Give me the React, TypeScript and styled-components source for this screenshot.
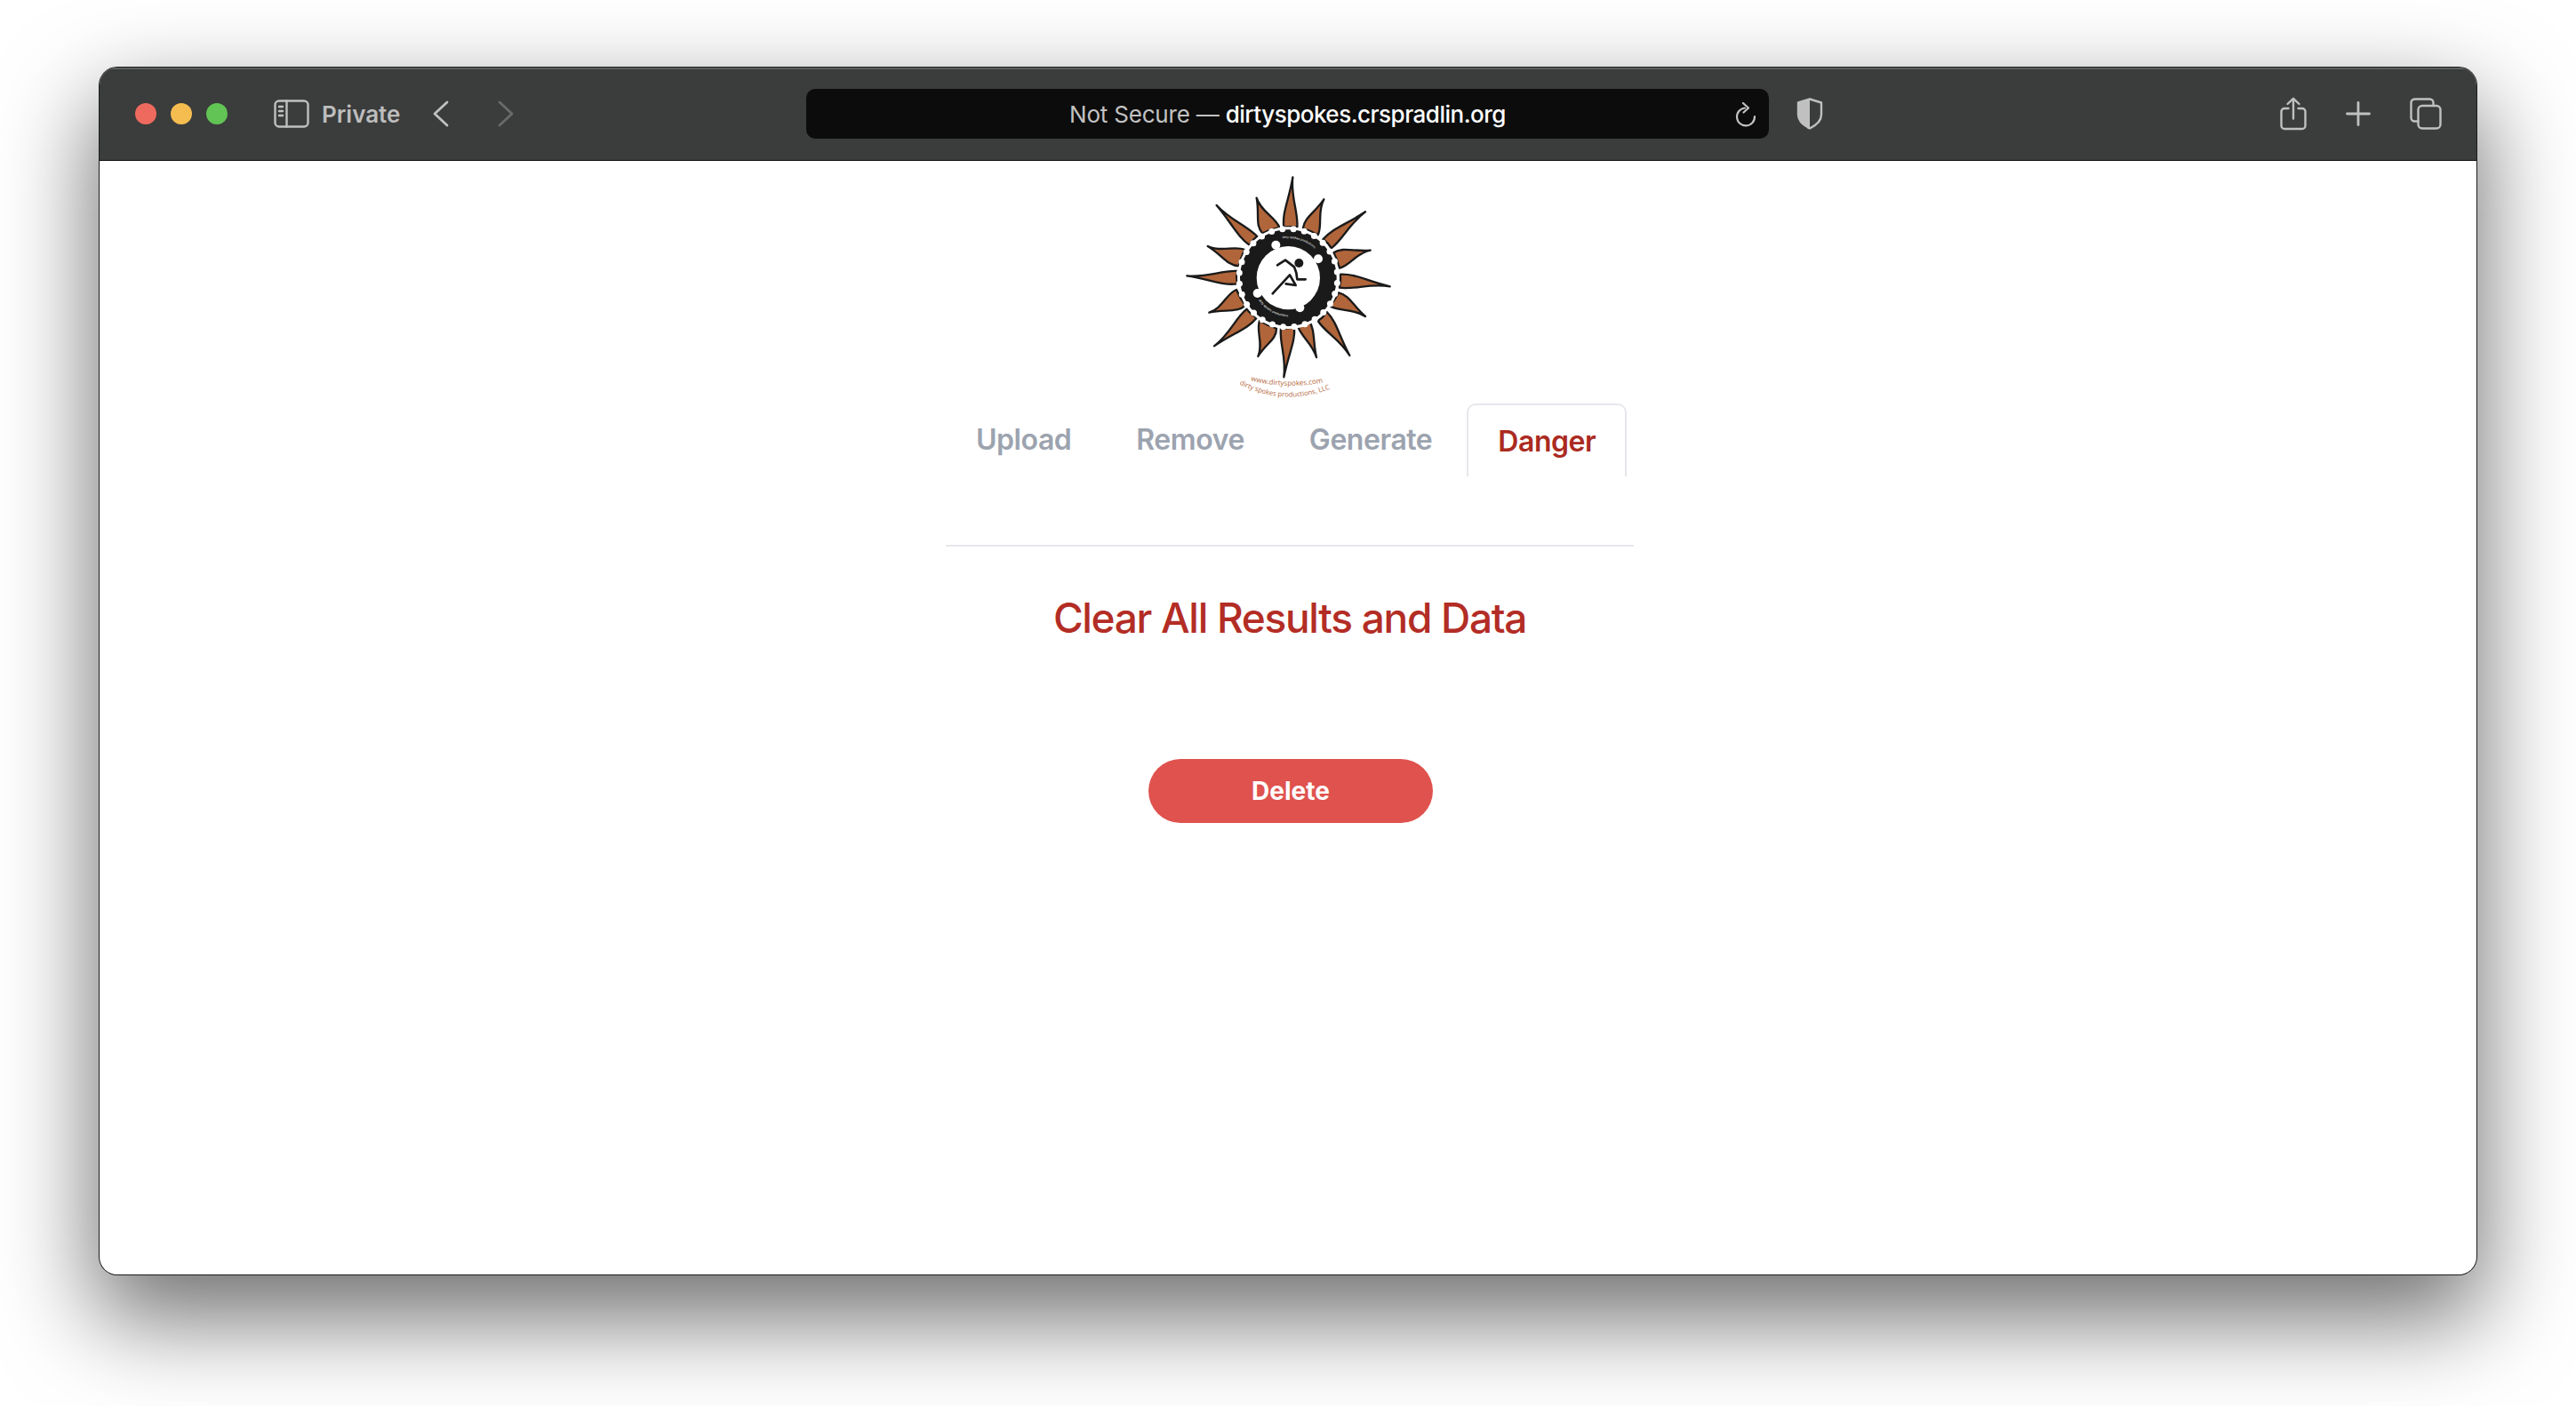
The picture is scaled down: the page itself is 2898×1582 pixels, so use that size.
import React from "react";
import styled, { createGlobalStyle } from "styled-components";

const Global = createGlobalStyle`
  html, body { margin: 0; padding: 0; background: #fff; }
  body { font-family: Inter, "Liberation Sans", sans-serif; overflow: hidden; }
`;

const Page = styled.div`
  width: 2898px;
  height: 1582px;
  box-sizing: border-box;
  padding: 76px 112px 148px;
  background: #fff;
`;

const Window = styled.div`
  height: 100%;
  display: flex;
  flex-direction: column;
  background: #fff;
  border-radius: 20px;
  overflow: hidden;
  box-shadow: 0 0 0 1px #1c1c1c, 0 44px 105px 6px rgba(0, 0, 0, 0.56);
`;

const Toolbar = styled.header`
  flex: none;
  height: 105px;
  box-sizing: border-box;
  padding-bottom: 2px;
  display: grid;
  grid-template-columns: 795px 1083px 1fr;
  align-items: center;
  background: #3b3c3c;
  border-top: 2px solid #5d5e5e;
  border-bottom: 1px solid #0d0d0d;
  color: #c0c0c0;
`;

const LeftTools = styled.div`
  display: flex;
  align-items: center;
  padding-left: 40px;
`;

const Lights = styled.div`
  display: flex;
  gap: 16px;
  margin-right: 52px;
`;

const Light = styled.span<{ $c: string }>`
  width: 24px;
  height: 24px;
  border-radius: 50%;
  background: ${(p) => p.$c};
`;

const PrivateLabel = styled.span`
  margin: 0 37px 0 14px;
  font-size: 26px;
  font-weight: 600;
  color: #bdbdbd;
`;

const ChevronGap = styled.span`
  width: 55px;
`;

const UrlBar = styled.div`
  position: relative;
  height: 56px;
  display: flex;
  align-items: center;
  justify-content: center;
  background: #0c0c0c;
  border-radius: 10px;
  font-size: 26px;
  letter-spacing: -0.2px;
  color: #c2c2c2;
  white-space: pre;
`;

const Domain = styled.span`
  color: #fff;
  font-weight: 500;
  letter-spacing: -0.5px;
`;

const Reload = styled.span`
  position: absolute;
  right: 13px;
  top: 15px;
  display: flex;
`;

const RightTools = styled.div`
  display: flex;
  align-items: center;
  padding-left: 31px;
`;

const Spacer = styled.div`
  flex: 1;
`;

const ShareSlot = styled.span`
  display: flex;
  margin-right: 44px;
`;

const PlusSlot = styled.span`
  display: flex;
  margin-right: 44px;
`;

const TabsSlot = styled.span`
  display: flex;
  margin-right: 39px;
`;

const Body = styled.main`
  flex: 1;
  display: flex;
  flex-direction: column;
  align-items: center;
`;

const LogoBox = styled.div`
  flex: none;
  width: 340px;
  height: 273px;
  margin-left: 3px;
`;

const Panel = styled.section`
  width: 774px;
  margin-left: 4px;
  display: flex;
  flex-direction: column;
  align-items: center;
`;

const TabRow = styled.nav`
  align-self: stretch;
  height: 82px;
  display: flex;
  gap: 5px;
  align-items: flex-start;
`;

const Tab = styled.a<{ $active?: boolean }>`
  box-sizing: border-box;
  height: 82px;
  padding: ${(p) => (p.$active ? "17px 33px 0" : "17px 34px 0")};
  font-size: 32px;
  line-height: 48px;
  font-weight: 600;
  letter-spacing: -0.45px;
  color: ${(p) => (p.$active ? "#ab2a21" : "#9ca3af")};
  border: ${(p) => (p.$active ? "2px solid #e5e7eb" : "0")};
  border-bottom: 0;
  border-radius: 10px 10px 0 0;
`;

const Divider = styled.hr`
  align-self: stretch;
  height: 2px;
  margin: 77px 0 0;
  border: 0;
  background: #e5e7eb;
`;

const Title = styled.h1`
  margin: 44px 0 0;
  font-size: 46px;
  line-height: 72px;
  font-weight: 450;
  letter-spacing: -1.3px;
  color: #b32d25;
`;

const DeleteButton = styled.button`
  width: 320px;
  height: 72px;
  margin: 123px 0 0 2px;
  border: 0;
  border-radius: 36px;
  background: #df524e;
  color: #fff;
  font-family: inherit;
  font-size: 28px;
  font-weight: 700;
`;

const IconStroke = { fill: "none", stroke: "currentColor", strokeLinecap: "round", strokeLinejoin: "round" } as const;

const rays: number[][] = [
  [520, 55, 490, 225, 535, 225],
  [625, 130, 555, 228, 605, 250],
  [765, 172, 622, 265, 650, 295],
  [782, 302, 658, 310, 678, 362],
  [848, 424, 680, 383, 677, 428],
  [765, 525, 675, 445, 645, 490],
  [712, 657, 635, 510, 605, 540],
  [600, 663, 575, 540, 538, 560],
  [490, 730, 525, 560, 480, 565],
  [403, 660, 465, 565, 408, 540],
  [255, 625, 398, 530, 365, 500],
  [238, 512, 360, 488, 330, 435],
  [163, 388, 333, 415, 333, 372],
  [233, 288, 338, 355, 358, 300],
  [263, 150, 375, 285, 400, 255],
  [398, 125, 418, 245, 475, 225],
];

function rayPath([tx, ty, ax, ay, bx, by]: number[]): string {
  const mx = (ax + bx) / 2;
  const my = (ay + by) / 2;
  const dx = tx - mx;
  const dy = ty - my;
  const wx = (bx - ax) / 2;
  const wy = (by - ay) / 2;
  const p = (x: number, y: number) => `${x.toFixed(1)} ${y.toFixed(1)}`;
  return [
    `M${p(ax, ay)}`,
    `C${p(mx - wx * 1.4 + dx * 0.3, my - wy * 1.4 + dy * 0.3)} ${p(mx - wx * 0.4 + dx * 0.55, my - wy * 0.4 + dy * 0.55)} ${p(tx, ty)}`,
    `C${p(mx - wx * 0.2 + dx * 0.6, my - wy * 0.2 + dy * 0.6)} ${p(mx + wx * 1.1 + dx * 0.3, my + wy * 1.1 + dy * 0.3)} ${p(bx, by)}`,
    `Q${p(mx + dx * 0.03, my + dy * 0.03)} ${p(ax, ay)}Z`,
  ].join(" ");
}

const notches = Array.from({ length: 28 }, (_, i) => {
  const a = ((i * 360) / 28 + 6) * (Math.PI / 180);
  return { x: 505 + 166 * Math.cos(a), y: 395 + 166 * Math.sin(a) };
});

const Logo = () => (
  <svg width="340" height="280" viewBox="0 0 1020 840" role="img" aria-label="Dirty Spokes logo">
    <defs>
      <path id="ringTop" d="M485 262 A134 134 0 0 1 635 370" />
      <path id="ringBottom" d="M405 470 A128 128 0 0 0 550 520" />
      <path id="urlArc" d="M378 742 Q500 772 630 747" />
      <path id="llcArc" d="M340 754 Q500 836 672 759" />
    </defs>
    {rays.map((r, i) => (
      <path key={i} d={rayPath(r)} fill="#b0653a" stroke="#1a1a1a" strokeWidth="7" strokeLinejoin="round" />
    ))}
    <circle cx="505" cy="395" r="172" fill="#fff" />
    <circle cx="505" cy="395" r="163" fill="#1a1a1a" />
    {notches.map((n, i) => (
      <circle key={i} cx={n.x} cy={n.y} r="10.5" fill="#fff" />
    ))}
    <circle cx="505" cy="395" r="107" fill="#fff" />
    <circle cx="463" cy="284" r="15" fill="#fff" />
    <circle cx="606" cy="331" r="15" fill="#fff" />
    <circle cx="401" cy="447" r="15" fill="#fff" />
    <circle cx="544" cy="496" r="15" fill="#fff" />
    <text fontSize="10" fill="#fff" fontFamily="Inter, sans-serif">
      <textPath href="#ringTop">dirty spokes productions</textPath>
    </text>
    <text fontSize="10" fill="#fff" fontFamily="Inter, sans-serif">
      <textPath href="#ringBottom">dirty spokes productions</textPath>
    </text>
    <circle cx="541" cy="345" r="15" fill="#1a1a1a" />
    <path
      d="M468 352 L495 335 L525 358 L532 378 L535 400 L563 400 M452 448 L510 385 L530 420 L497 415"
      fill="none"
      stroke="#1a1a1a"
      strokeWidth="8"
      strokeLinecap="round"
      strokeLinejoin="round"
    />
    <text fontSize="24" fill="#b5673c" fontFamily="'Open Sans', sans-serif">
      <textPath href="#urlArc">www.dirtyspokes.com</textPath>
    </text>
    <text fontSize="23" fill="#b5673c" fontFamily="'Open Sans', sans-serif">
      <textPath href="#llcArc">dirty spokes productions, LLC</textPath>
    </text>
  </svg>
);

const SidebarIcon = () => (
  <svg width="40" height="32" viewBox="0 0 40 32" {...IconStroke} strokeWidth="2.4">
    <rect x="1.5" y="1.5" width="37" height="29" rx="4.5" />
    <path d="M14.5 1.5 V30.5 M6 8 H10 M6 13 H10 M6 18 H10" />
  </svg>
);

const Chevron = ({ back, dim }: { back?: boolean; dim?: boolean }) => (
  <svg width="18" height="30" viewBox="0 0 18 30" {...IconStroke} strokeWidth="2.8" opacity={dim ? 0.35 : 1}>
    <path d={back ? "M16 2 L2 15 L16 28" : "M2 2 L16 15 L2 28"} />
  </svg>
);

const ReloadIcon = () => (
  <svg width="26" height="30" viewBox="0 0 26 30" {...IconStroke} strokeWidth="2.2">
    <path d="M12 6.5 A10 10 0 1 0 23 16" />
    <path d="M10 1 L16 6.5 L10.5 11.5" />
  </svg>
);

const ShieldIcon = () => (
  <svg width="30" height="36" viewBox="0 0 30 36">
    <path d="M15 1.5 L28 5.5 V19 C28 27 21 31.5 15 34.5 C9 31.5 2 27 2 19 V5.5 Z" fill="none" stroke="currentColor" strokeWidth="2.4" strokeLinejoin="round" />
    <path d="M15 1.5 V34.5 C9 31.5 2 27 2 19 V5.5 Z" fill="currentColor" />
  </svg>
);

const ShareIcon = () => (
  <svg width="30" height="38" viewBox="0 0 30 38" {...IconStroke} strokeWidth="2.4">
    <path d="M9.5 13 H5 A3.5 3.5 0 0 0 1.5 16.5 V32.5 A3.5 3.5 0 0 0 5 36 H25 A3.5 3.5 0 0 0 28.5 32.5 V16.5 A3.5 3.5 0 0 0 25 13 H20.5" />
    <path d="M15 24.5 V2 M8.5 8 L15 1.8 L21.5 8" />
  </svg>
);

const PlusIcon = () => (
  <svg width="28" height="28" viewBox="0 0 28 28" {...IconStroke} strokeWidth="2.8">
    <path d="M14 1.5 V26.5 M1.5 14 H26.5" />
  </svg>
);

const TabsIcon = () => (
  <svg width="36" height="36" viewBox="0 0 36 36" {...IconStroke} strokeWidth="2.4">
    <rect x="9.5" y="9" width="25" height="25.5" rx="4.5" />
    <path d="M9.5 26.5 H5.5 A4 4 0 0 1 1.5 22.5 V5.5 A4 4 0 0 1 5.5 1.5 H22.5 A4 4 0 0 1 26.5 5.5 V9" />
  </svg>
);

export default function App() {
  return (
    <>
      <Global />
      <Page>
        <Window>
          <Toolbar>
            <LeftTools>
              <Lights>
                <Light $c="#ee6a5f" />
                <Light $c="#f5bd4f" />
                <Light $c="#61c454" />
              </Lights>
              <SidebarIcon />
              <PrivateLabel>Private</PrivateLabel>
              <Chevron back />
              <ChevronGap />
              <Chevron dim />
            </LeftTools>
            <UrlBar>
              Not Secure — <Domain>dirtyspokes.crspradlin.org</Domain>
              <Reload>
                <ReloadIcon />
              </Reload>
            </UrlBar>
            <RightTools>
              <ShieldIcon />
              <Spacer />
              <ShareSlot>
                <ShareIcon />
              </ShareSlot>
              <PlusSlot>
                <PlusIcon />
              </PlusSlot>
              <TabsSlot>
                <TabsIcon />
              </TabsSlot>
            </RightTools>
          </Toolbar>
          <Body>
            <LogoBox>
              <Logo />
            </LogoBox>
            <Panel>
              <TabRow>
                <Tab>Upload</Tab>
                <Tab>Remove</Tab>
                <Tab>Generate</Tab>
                <Tab $active>Danger</Tab>
              </TabRow>
              <Divider />
              <Title>Clear All Results and Data</Title>
              <DeleteButton>Delete</DeleteButton>
            </Panel>
          </Body>
        </Window>
      </Page>
    </>
  );
}
